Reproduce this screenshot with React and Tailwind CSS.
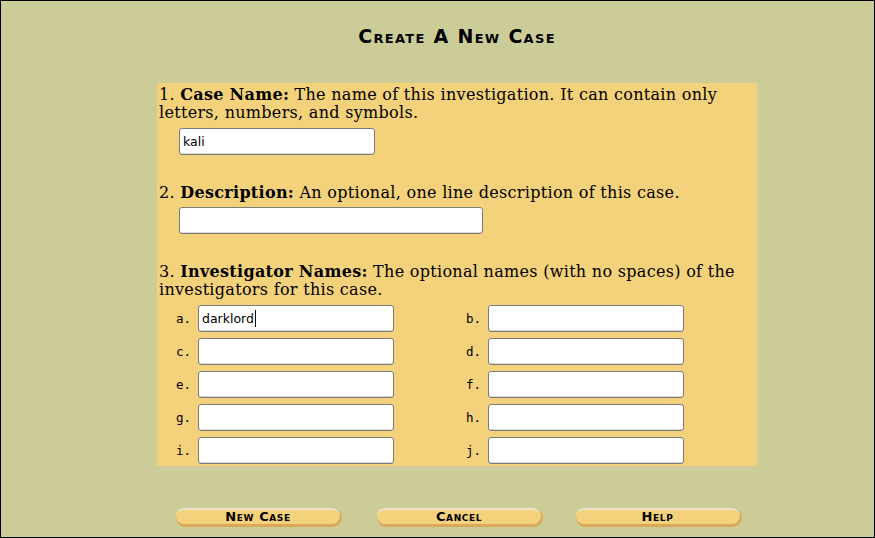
import React from "react";

const serif = { fontFamily: '"DejaVu Serif", serif' };

function Field({ w, value, cursor }) {
  return (
    <div
      className={`${w} h-[27px] bg-white border border-[#7b7b7b] rounded-[3px] flex items-center pl-[3px] text-[12.5px] text-black shadow-[inset_0_-1px_0_#d8d8d8]`}
      style={{ fontFamily: '"DejaVu Sans", sans-serif' }}
    >
      <span>{value}</span>
      {cursor && <span className="inline-block w-[1px] h-[17px] bg-black ml-[1px]" />}
    </div>
  );
}

function Cell({ label, value, cursor }) {
  return (
    <div className="w-[290px] flex items-center">
      <div
        className="w-[41px] pr-[7px] text-right text-[12.5px] text-black"
        style={{ fontFamily: '"DejaVu Sans Mono", monospace' }}
      >
        {label}
      </div>
      <Field w="w-[196px]" value={value} cursor={cursor} />
    </div>
  );
}

function Btn({ children }) {
  return (
    <div className="w-[166px] h-[19px] rounded-full bg-[#dba759] relative">
      <div className="absolute left-0 right-[2px] top-0 h-[16px] rounded-full bg-[#f4d27b] border-t-2 border-[#ece4c8] flex items-center justify-center">
        <span
          className="text-[13px] font-bold text-black [font-variant:small-caps] tracking-[0.6px]"
          style={{ fontFamily: '"DejaVu Sans", sans-serif' }}
        >
          {children}
        </span>
      </div>
    </div>
  );
}

export default function App() {
  const rows = [
    ["a.", "darklord", true, "b.", ""],
    ["c.", "", false, "d.", ""],
    ["e.", "", false, "f.", ""],
    ["g.", "", false, "h.", ""],
    ["i.", "", false, "j.", ""],
  ];
  return (
    <div className="w-[875px] h-[538px] bg-[#cccc99] border border-black overflow-hidden relative">
      <div className="ml-[156px] w-[600px] flex flex-col">
        <div
          className="h-[70px] pt-[21px] text-center text-[19px] font-bold text-black [font-variant:small-caps] tracking-[1.3px]"
          style={{ fontFamily: '"DejaVu Sans", sans-serif' }}
        >
          Create A New Case
        </div>
        <div className="h-[12px]" />
        <div
          className="bg-[#f4d27b] pt-[3px] pb-[2px] pl-[2px] text-[16px] leading-[18px] tracking-[0.3px] text-black"
          style={serif}
        >
          <div>
            1. <b>Case Name:</b> The name of this investigation. It can contain only letters, numbers, and symbols.
          </div>
          <div className="mt-[6px] ml-[20px] tracking-normal">
            <Field w="w-[196px]" value="kali" />
          </div>
          <div className="mt-[29px]">
            2. <b>Description:</b> An optional, one line description of this case.
          </div>
          <div className="mt-[5px] ml-[20px] tracking-normal">
            <Field w="w-[304px]" value="" />
          </div>
          <div className="mt-[29px]">
            3. <b>Investigator Names:</b> The optional names (with no spaces) of the investigators for this case.
          </div>
          <div className="mt-[6px] -ml-[2px] flex flex-col gap-[6px] tracking-normal">
            {rows.map((r) => (
              <div key={r[0]} className="flex">
                <Cell label={r[0]} value={r[1]} cursor={r[2]} />
                <Cell label={r[3]} value={r[4]} />
              </div>
            ))}
          </div>
        </div>
        <div className="mt-[42px] flex">
          <div className="w-[200px] flex justify-center pl-[4px]">
            <Btn>New Case</Btn>
          </div>
          <div className="w-[200px] flex justify-center pl-[6px]">
            <Btn>Cancel</Btn>
          </div>
          <div className="w-[200px] flex justify-center pl-[3px]">
            <Btn>Help</Btn>
          </div>
        </div>
      </div>
    </div>
  );
}
